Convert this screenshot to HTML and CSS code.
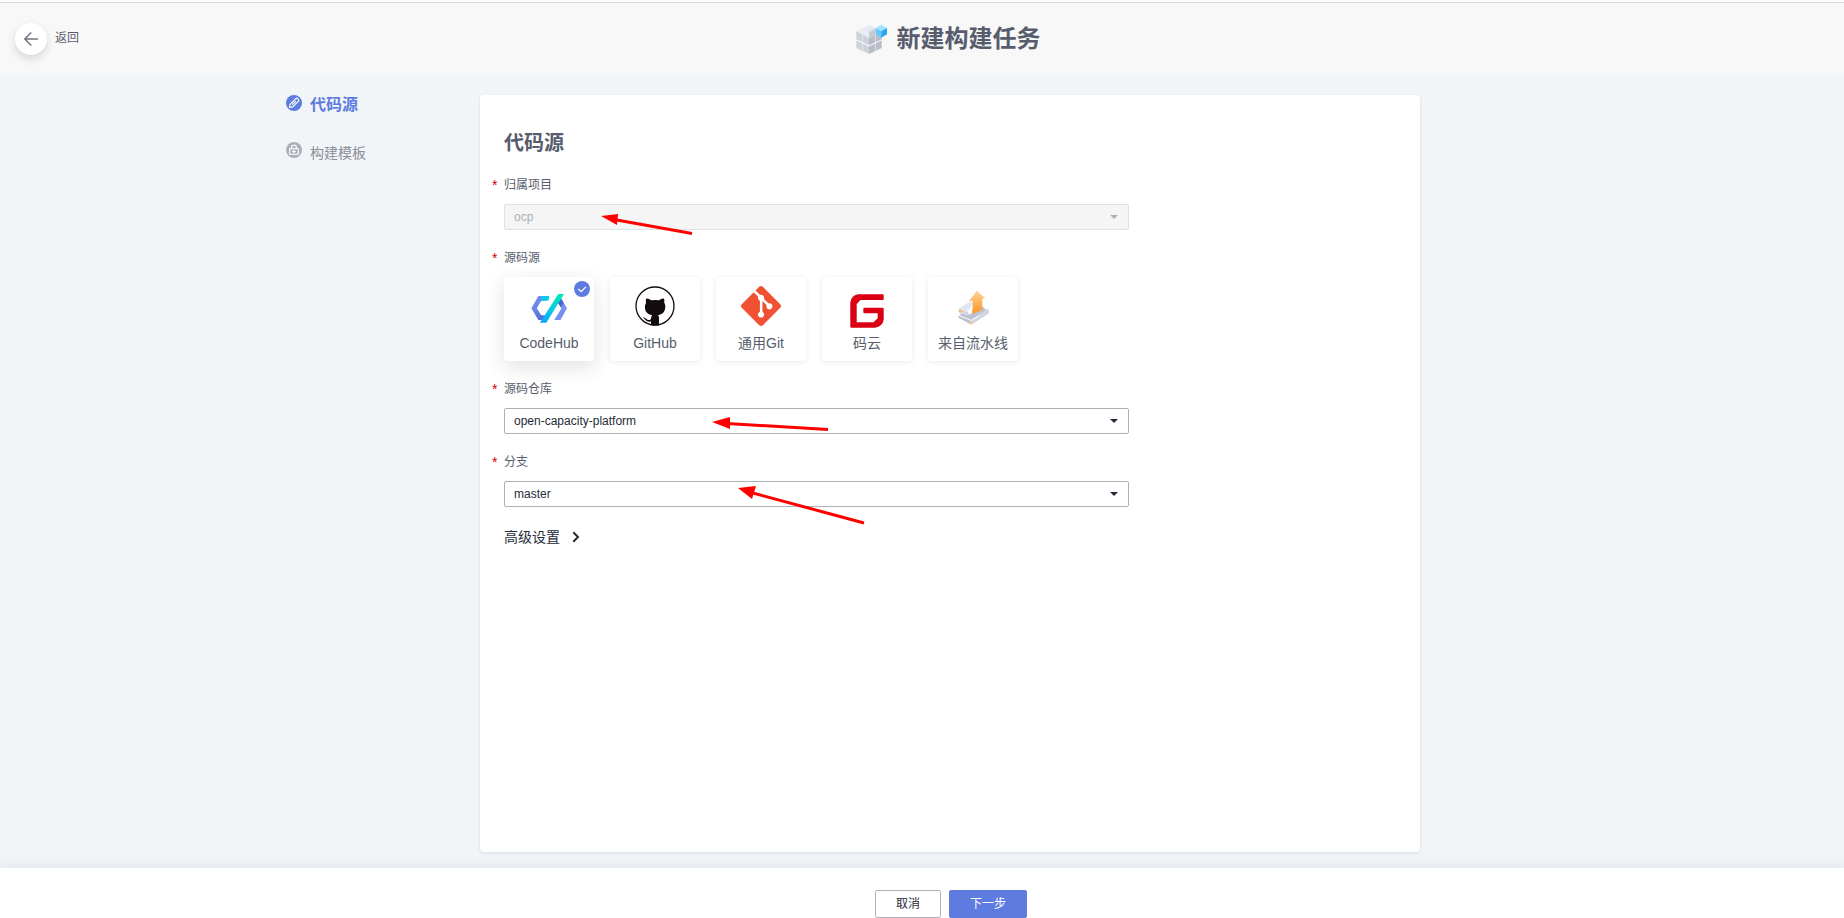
FILE: index.html
```html
<!DOCTYPE html>
<html lang="zh-CN">
<head>
<meta charset="utf-8">
<meta name="viewport" content="width=device-width, initial-scale=1">
<title>新建构建任务</title>
<link rel="stylesheet" href="styles.css">
</head>
<body>
<div class="page">
  <header class="header">
    <button class="back" type="button">
      <span class="back-circle">
        <svg width="16" height="16" viewBox="0 0 16 16" fill="none" stroke="#71757f" stroke-width="1.5" aria-hidden="true"><path d="M15 8H2M8.3 1.5 1.8 8l6.5 6.5"/></svg>
      </span>
      <span>返回</span>
    </button>
    <h1 class="title">
      <svg width="32" height="32" viewBox="0 0 32 32" aria-hidden="true">
        <path d="M13 1.7 25.7 8.3 13 15 .3 8.3z" fill="#e9edf6"/>
        <path d="M.3 8.3 13 15v16L.3 25z" fill="#ced2db"/>
        <path d="M25.7 8.3 13 15v16l12.7-6z" fill="#b9bdc8"/>
        <path d="m13 9 6.700-3.400v6L13 15z" fill="#c6cad4"/>
        <path d="M13 9 19.500 5.500l-4-2L9 7z" fill="#e2e6ee"/>
        <path d="M6.600 11.800V28M19.400 11.800V28" fill="none" stroke="#f2f4f8" stroke-width=".6"/>
        <path d="M.3 16.800 13 23l12.700-6.200" fill="none" stroke="#fff" stroke-width="1"/>
        <path d="m25.300 1.700 5.700 3.300-5.700 3-5.600-3z" fill="#a5e5ff"/>
        <path d="m19.700 5 5.600 3v6.700l-5.600-3.400z" fill="#65cbff"/>
        <path d="m31 5-5.700 3v6.700l5.700-3.400z" fill="#2ca7ea"/>
      </svg>
      <span>新建构建任务</span>
    </h1>
  </header>

  <main class="body">
    <nav class="steps" aria-label="步骤">
      <a class="step step-active" href="#source" aria-current="step">
        <svg width="16" height="16" viewBox="0 0 16 16" aria-hidden="true"><circle cx="8" cy="8" r="8" fill="#5e7ce0"/><g fill="none" stroke="#fff" stroke-width="1.2" stroke-linejoin="round"><path d="m3.500 12.500.6-3.200 5.600-5.600q1-.9 1.900 0l.7.700q.9 1 0 1.900l-5.600 5.600z"/><path d="m6.300 9.700 3.600-3.600"/></g></svg>
        <span>代码源</span>
      </a>
      <a class="step" href="#template">
        <svg width="16" height="16" viewBox="0 0 16 16" aria-hidden="true"><circle cx="8" cy="8" r="8" fill="#adb0b8"/><g fill="none" stroke="#fff" stroke-width="1.1"><path d="M3.700 6.700h8.600v5.600H3.700zM5.600 6.500V5.400a2.400 2.400 0 0 1 4.800 0v1.100"/><path d="M8 7.800v3.400M6.300 9.500h3.400"/></g></svg>
        <span>构建模板</span>
      </a>
    </nav>

    <form class="card" id="source">
      <h2 class="card-title">代码源</h2>

      <div class="field">
        <label class="label" for="project">归属项目</label>
        <div class="select-wrap disabled">
          <select class="select" id="project" disabled><option>ocp</option></select>
        </div>
      </div>

      <fieldset class="field sources">
        <legend class="label">源码源</legend>
        <div class="tiles">
          <label class="tile">
            <input class="tile-input" type="radio" name="source" checked>
            <svg class="logo" width="40" height="40" viewBox="0 0 40 40" aria-hidden="true">
              <defs>
                <linearGradient id="hub-slash" x1="0" y1="1" x2=".6" y2="0"><stop offset="0" stop-color="#109cff"/><stop offset=".5" stop-color="#0bc6e8"/><stop offset="1" stop-color="#00e6bd"/></linearGradient>
                <linearGradient id="hub-left" x1="0" y1="0" x2="1" y2="1"><stop offset="0" stop-color="#839df5"/><stop offset="1" stop-color="#4762cf"/></linearGradient>
              </defs>
              <path d="M9.300 10H17v4.800h-4.800L7.800 22.300l4.500 6.900h3.600L13.800 34H9.300L2.300 22.300z" fill="url(#hub-left)"/>
              <path d="M12.500 10H20v2.500q0 2.300-2.400 2.300h-6z" fill="#0fc8ed"/>
              <path d="M31.500 11.500 38 22.300 31.500 34h-6.200l7.200-11.700-4-6z" fill="#7590ed"/>
              <path d="m31.500 11.500 3.300 5.500-3 4.200-3.300-4.900z" fill="#4b67d3"/>
              <path d="M29.300 8h5.700L17.400 36.700h-6.500z" fill="url(#hub-slash)"/>
            </svg>
            <span>CodeHub</span>
            <svg class="tick" width="16" height="16" viewBox="0 0 16 16" aria-hidden="true"><circle cx="8" cy="8" r="8" fill="#5e7ce0"/><path d="m4.300 8 2.800 2.700 4.800-4.800" fill="none" stroke="#fff" stroke-width="1.300"/></svg>
          </label>
          <label class="tile">
            <input class="tile-input" type="radio" name="source">
            <svg class="logo" width="40" height="40" viewBox="0 0 40 40" aria-hidden="true">
              <circle cx="20" cy="20" r="19" fill="#fff" stroke="#130c0e" stroke-width="1.300"/>
              <path d="M11.300 12.400c1.900-.1 3.600.8 5 1.900a20 20 0 0 1 7.600 0c1.500-1.100 3.100-2 5-1.900.6 1.400.6 3 .2 4.200 1 1.300 1.300 2.900 1.200 4.500-.2 5-2.900 7.500-7.300 8.100.7.800 1 1.600 1 2.800v6.900q-4 1.300-8 0v-3.400c-5.300.9-5.100-2.600-8.300-3.700 2.600-1.300 3.900 2.500 6.200 2.300 1.300 0 2.100-.6 2.300-2.500.1-1 .4-1.800 1-2.400-4.700-.7-7.300-3.500-7.300-8.100 0-1.500.3-2.900 1.200-4.200-.4-1.400-.4-3.100.2-4.500z" fill="#130c0e"/>
            </svg>
            <span>GitHub</span>
          </label>
          <label class="tile">
            <input class="tile-input" type="radio" name="source">
            <svg class="logo" width="40" height="40" viewBox="0 0 24 24" aria-hidden="true"><path fill="#f05133" d="M23.546 10.93L13.067.452c-.604-.603-1.582-.603-2.188 0L8.708 2.627l2.76 2.76c.645-.215 1.379-.07 1.889.441.516.515.658 1.258.438 1.9l2.658 2.66c.645-.223 1.387-.078 1.9.435.721.72.721 1.884 0 2.604-.719.719-1.881.719-2.6 0-.539-.541-.674-1.337-.404-1.996L12.86 8.955v6.525c.176.086.342.203.488.348.713.721.713 1.883 0 2.6-.719.721-1.889.721-2.609 0-.719-.719-.719-1.879 0-2.598.182-.18.387-.316.605-.406V8.835c-.217-.091-.424-.222-.6-.401-.545-.545-.676-1.342-.396-2.009L7.636 3.7.45 10.881c-.6.605-.6 1.584 0 2.189l10.48 10.477c.604.604 1.582.604 2.186 0l10.43-10.43c.605-.603.605-1.582 0-2.187"/></svg>
            <span>通用Git</span>
          </label>
          <label class="tile">
            <input class="tile-input" type="radio" name="source">
            <svg class="logo" width="40" height="40" viewBox="0 0 40 40" aria-hidden="true"><path d="M11 8.300H35.700q1 0 1 1v3.700q0 1-1 1H13.500L9.700 18V36.300H26.500l4.200-4V27.300H17.500q-1.200 0-1.200-1.200V22.900q0-1.200 1.200-1.200H35.500q1.200 0 1.200 1.200V33.500q-1 7-8.700 8.200H4.300q-1 0-1-1V16.500q.7-6.700 7.700-8.200z" fill="#dc0014"/></svg>
            <span>码云</span>
          </label>
          <label class="tile">
            <input class="tile-input" type="radio" name="source">
            <svg class="logo" width="40" height="40" viewBox="0 0 40 40" aria-hidden="true">
              <defs><linearGradient id="up" x1="0" y1="0" x2="0" y2="1"><stop offset="0" stop-color="#ffd39a"/><stop offset="1" stop-color="#ff9422"/></linearGradient></defs>
              <path d="m5.500 29.500 5.500-4 19-5 5.700 6.800-17 11q-1.200.3-2.200-.5L6 32q-1.500-1.300-.5-2.500z" fill="#bcc2d0"/>
              <path d="m19 33 16-10.500q1.500 2.500.7 4.800l-17 11z" fill="#d0d5e1"/>
              <path d="M5.300 29 18.500 34.500l8-5" fill="none" stroke="#fff" stroke-width="1"/>
              <path d="M5.300 25q-.5-1.700.7-2.500l8-5.300q5-2 10 0l5.700 4-12 7.300q-6 1-12.400-3.500z" fill="#e0e7f2"/>
              <path d="M6 23.500q7 4.500 12.500 4" fill="none" stroke="#c3cbd9" stroke-width="1"/>
              <path d="m23.700 4.700 8.600 7.600-3 .2v11.500L18.700 28l.8-6.500V14.500l-3.800 1z" fill="url(#up)"/>
              <path d="M19.500 17.500 16.200 24l-2.600-.8 2.300 4.800 3.300-1z" fill="#fff"/>
              <circle cx="7.500" cy="25.300" r="1.700" fill="#ffbd70"/><circle cx="18.500" cy="36.500" r="1.600" fill="#ffc98a"/>
            </svg>
            <span>来自流水线</span>
          </label>
        </div>
      </fieldset>

      <div class="field">
        <label class="label" for="repo">源码仓库</label>
        <div class="select-wrap">
          <select class="select" id="repo"><option>open-capacity-platform</option></select>
        </div>
      </div>

      <div class="field">
        <label class="label" for="branch">分支</label>
        <div class="select-wrap">
          <select class="select" id="branch"><option>master</option></select>
        </div>
      </div>

      <button class="advanced" type="button">
        <span>高级设置</span>
        <svg width="8" height="12" viewBox="0 0 8 12" fill="none" stroke="#252b3a" stroke-width="2" aria-hidden="true"><path d="m1.300 1.300 4.700 4.700-4.700 4.700"/></svg>
      </button>

      <svg class="arrows" width="400" height="440" viewBox="0 0 400 440" fill="#f00" stroke="#f00" stroke-width="3" aria-hidden="true">
        <path d="m134 124.500 78 14"/><path d="m247 328.500 101 6"/><path d="m271 397.500 113 30.500"/>
        <g stroke="none"><path d="m121 121 17-2-1 11z"/><path d="m232 327 18-5v12z"/><path d="m258 393 18-2-4 13z"/></g>
      </svg>
    </form>
  </main>

  <footer class="footer">
    <button class="btn" type="button">取消</button>
    <button class="btn btn-primary" type="button">下一步</button>
  </footer>
</div>
</body>
</html>
```

FILE: styles.css
```css
* {
  box-sizing: border-box;
}

body {
  margin: 0;
  background: #f1f5f8;
  color: #575d6c;
  font: 12px/20px "Liberation Sans", "Noto Sans CJK SC", sans-serif;
}

button,
select {
  font: inherit;
}

.page {
  min-height: 100vh;
  display: flex;
  flex-direction: column;
  border-top: 2px solid #fff;
}

.header {
  display: grid;
  grid-template-columns: 52px 1fr;
  align-items: center;
  height: 73px;
  border-top: 1px solid #d9d9db;
  background: #f8f8f8;
}

.back {
  display: flex;
  gap: 8px;
  margin-left: 15px;
  padding: 0;
  border: 0;
  background: none;
  color: #575d6c;
  white-space: nowrap;
  line-height: 30px;
}

.back-circle {
  display: flex;
  flex: none;
  align-items: center;
  justify-content: center;
  width: 32px;
  height: 32px;
  border-radius: 50%;
  background: #fff;
  box-shadow: 0 4px 8px rgba(37, 43, 58, 0.16);
}

.title {
  display: flex;
  align-items: center;
  justify-content: center;
  gap: 9px;
  margin: 0;
  font-size: 24px;
  line-height: 32px;
}

.body {
  flex: 1;
  display: flex;
  justify-content: center;
  padding: 20px 138px 16px 0;
}

.steps {
  display: flex;
  flex-direction: column;
  gap: 27px;
  width: 194px;
}

.step {
  display: flex;
  gap: 8px;
  color: #8a8e99;
  font-size: 14px;
  line-height: 22px;
  text-decoration: none;
}

.step-active {
  color: #5e7ce0;
  font-size: 16px;
  font-weight: bold;
  line-height: 20px;
}

.card {
  position: relative;
  width: 940px;
  padding: 34px 24px;
  border-radius: 4px;
  background: #fff;
  box-shadow: 0 1px 3px rgba(37, 43, 58, 0.12);
}

.card-title {
  margin: 0 0 18px;
  font-size: 20px;
  line-height: 28px;
}

.field {
  max-width: 625px;
  margin: 0 0 18px;
  padding: 0;
  border: 0;
}

.label {
  display: block;
  position: relative;
  margin-bottom: 9px;
  padding: 0;
}

.label::before {
  content: "*";
  position: absolute;
  left: -12px;
  color: #c7000b;
  font-size: 14px;
}

.select-wrap {
  position: relative;
  color: #252b3a;
}

.select-wrap::after {
  content: "";
  position: absolute;
  top: 11px;
  right: 11px;
  border: 4px solid transparent;
  border-top-color: currentColor;
  border-bottom: 0;
  pointer-events: none;
}

.select {
  display: block;
  appearance: none;
  width: 100%;
  height: 26px;
  padding: 0 9px;
  border: 1px solid #adb0b8;
  border-radius: 2px;
  background: #fff;
  color: inherit;
  opacity: 1;
}

.disabled {
  color: #adb0b8;
}

.disabled .select {
  border-color: #dfe1e6;
  background: #f5f5f6;
}

.tiles {
  display: flex;
  gap: 16px;
}

.tile {
  position: relative;
  display: flex;
  flex-direction: column;
  align-items: center;
  gap: 7px;
  width: 90px;
  padding: 9px 0 8px;
  border-radius: 4px;
  background: #fff;
  box-shadow: 0 1px 5px rgba(37, 43, 58, 0.1);
  font-size: 14px;
  white-space: nowrap;
}

.tile:has(:checked) {
  box-shadow: 0 6px 20px rgba(37, 43, 58, 0.14);
}

.tile-input {
  position: absolute;
  inset: 0;
  width: 100%;
  height: 100%;
  margin: 0;
  opacity: 0;
}

.logo {
  overflow: visible;
}

.tick {
  position: absolute;
  top: 4px;
  right: 4px;
}

.advanced {
  display: flex;
  align-items: center;
  gap: 12px;
  margin-top: 20px;
  padding: 0;
  border: 0;
  background: none;
  color: #252b3a;
  font-size: 14px;
}

.arrows {
  position: absolute;
  top: 0;
  left: 0;
  pointer-events: none;
}

.footer {
  display: flex;
  justify-content: center;
  gap: 8px;
  padding: 22px 0 0 58px;
  background: #fff;
  box-shadow: 0 -2px 12px rgba(37, 43, 58, 0.08);
}

.btn {
  height: 28px;
  padding: 0 20px;
  border: 1px solid #adb0b8;
  border-radius: 2px;
  background: #fff;
  color: #252b3a;
  line-height: 24px;
}

.btn-primary {
  border-color: #5e7ce0;
  background: #5e7ce0;
  color: #fff;
}
```
